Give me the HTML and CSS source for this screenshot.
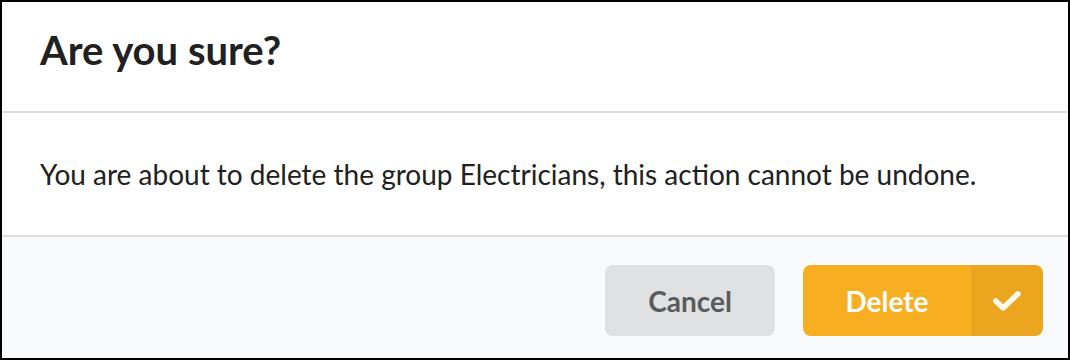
FILE: index.html
```html
<!DOCTYPE html>
<html lang="en">
<head>
<meta charset="utf-8">
<title>Are you sure?</title>
<link rel="stylesheet" href="styles.css">
</head>
<body>
<div class="modal">
  <div class="modal-header">Are you sure?</div>
  <div class="modal-content">You are about to delete the group Electricians, this action cannot be undone.</div>
  <div class="modal-actions">
    <button class="btn btn-cancel" type="button">Cancel</button>
    <button class="btn btn-delete" type="button">
      <span class="btn-label">Delete</span>
      <span class="btn-icon">
        <svg width="30" height="22" viewBox="0 0 30 22" aria-hidden="true">
          <polyline points="3.8,11 11.2,18 26,3.8" fill="none" stroke="#fff9ee" stroke-width="5.5" stroke-linecap="round" stroke-linejoin="round"/>
        </svg>
      </span>
    </button>
  </div>
</div>
</body>
</html>
```

FILE: styles.css
```css
html, body {
  margin: 0;
  padding: 0;
  background: #000;
}

.modal {
  width: 1070px;
  height: 360px;
  box-sizing: border-box;
  border: 2px solid #000;
  background: #fff;
  display: flex;
  flex-direction: column;
  font-family: Lato, "Liberation Sans", sans-serif;
  color: #212121;
}

.modal-header {
  height: 111px;
  box-sizing: border-box;
  padding: 24px 38px 0;
  font-size: 40px;
  font-weight: 700;
  line-height: 48px;
  border-bottom: 2px solid #dededf;
}

.modal-content {
  height: 124px;
  box-sizing: border-box;
  padding: 44px 38px 0;
  font-size: 28px;
  line-height: 34px;
  border-bottom: 2px solid #dededf;
}

.modal-actions {
  flex: 1;
  background: #f9fafb;
  display: flex;
  justify-content: flex-end;
  align-items: flex-start;
  gap: 28px;
  padding: 28px 25px 0 0;
}

.btn {
  height: 71px;
  border: none;
  border-radius: 8px;
  padding: 0;
  font-family: Lato, "Liberation Sans", sans-serif;
  font-size: 28px;
  font-weight: 700;
  cursor: pointer;
  display: flex;
  align-items: stretch;
  overflow: hidden;
}

.btn-cancel {
  width: 170px;
  background: #e0e1e2;
  color: #5b5b5b;
  justify-content: center;
  align-items: center;
}

.btn-delete {
  width: 240px;
  background: #f8ae21;
  color: #fff;
}

.btn-label {
  flex: 1;
  display: flex;
  align-items: center;
  justify-content: center;
}

.btn-icon {
  width: 72px;
  background: rgba(0, 0, 0, 0.05);
  display: flex;
  align-items: center;
  justify-content: center;
}

.btn-icon svg {
  display: block;
}
```
